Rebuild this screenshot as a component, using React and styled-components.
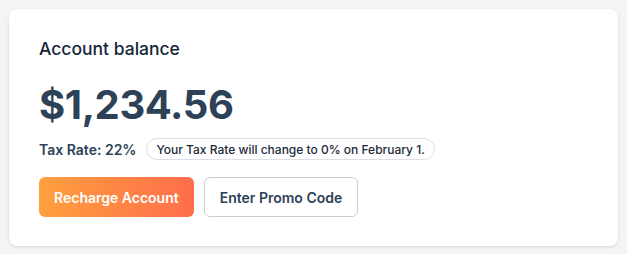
import React from "react";
import styled, { createGlobalStyle } from "styled-components";

const Global = createGlobalStyle`
  html, body { margin: 0; padding: 0; background: #f4f4f4; }
  body { font-family: Inter, "Noto Sans", sans-serif; -webkit-font-smoothing: antialiased; }
`;

const Page = styled.div`
  padding: 9px 9px 10px 9px;
`;

const Card = styled.section`
  background: #ffffff;
  border-radius: 8px;
  box-shadow: 0 1px 3px rgba(0, 0, 0, 0.12);
  padding: 28px 30px 29px 30px;
  display: flex;
  flex-direction: column;
`;

const Title = styled.h2`
  margin: 0;
  font-size: 17.5px;
  font-weight: 500;
  color: #15253a;
  line-height: 24px;
`;

const Amount = styled.div`
  margin-top: 20px;
  font-size: 40px;
  font-weight: 700;
  color: #2d4257;
  line-height: 48px;
  letter-spacing: -0.4px;
`;

const TaxRow = styled.div`
  margin-top: 9px;
  display: flex;
  align-items: center;
  gap: 10px;
`;

const TaxLabel = styled.span`
  font-size: 14px;
  font-weight: 600;
  color: #2d4257;
`;

const Badge = styled.span`
  display: inline-flex;
  align-items: center;
  height: 20px;
  padding: 0 9px;
  border: 1px solid #dcdfe3;
  border-radius: 999px;
  font-size: 12px;
  font-weight: 500;
  color: #1b2a3b;
`;

const Actions = styled.div`
  margin-top: 17px;
  display: flex;
  gap: 10px;
`;

const Button = styled.button`
  height: 40px;
  padding: 0 15px;
  border-radius: 6px;
  font-family: inherit;
  font-size: 14px;
  font-weight: 600;
  cursor: pointer;
  border: ${(p) => (p.$primary ? "none" : "1px solid #c9cdd3")};
  background: ${(p) =>
    p.$primary ? "linear-gradient(90deg, #ffa03e 0%, #ff6d4b 100%)" : "#ffffff"};
  color: ${(p) => (p.$primary ? "#ffffff" : "#2d4257")};
`;

export default function App() {
  return (
    <>
      <Global />
      <Page>
        <Card>
          <Title>Account balance</Title>
          <Amount>$1,234.56</Amount>
          <TaxRow>
            <TaxLabel>Tax Rate: 22%</TaxLabel>
            <Badge>Your Tax Rate will change to 0% on February 1.</Badge>
          </TaxRow>
          <Actions>
            <Button $primary>Recharge Account</Button>
            <Button>Enter Promo Code</Button>
          </Actions>
        </Card>
      </Page>
    </>
  );
}
